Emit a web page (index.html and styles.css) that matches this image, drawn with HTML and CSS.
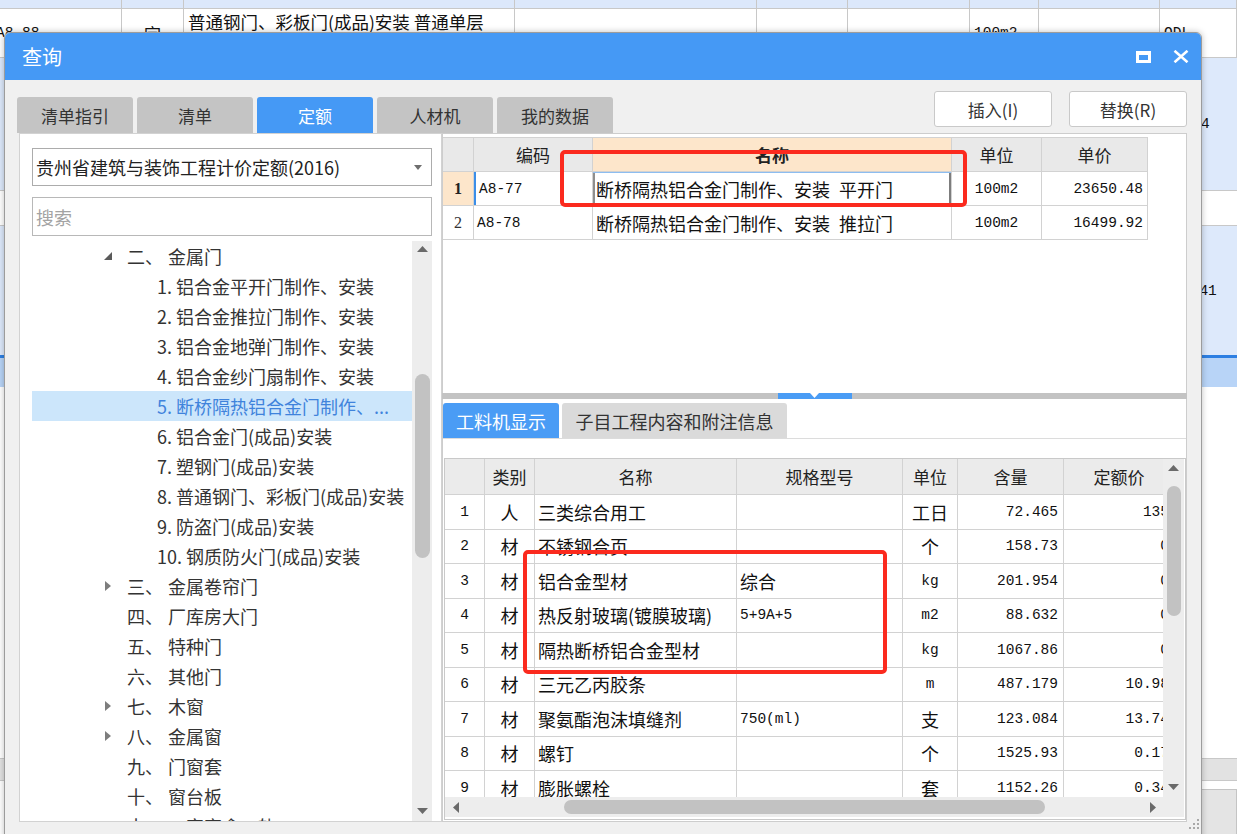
FILE: index.html
```html
<!DOCTYPE html>
<html lang="zh-CN">
<head>
<meta charset="utf-8">
<title>查询</title>
<link rel="stylesheet" href="styles.css">
</head>
<body>
<div class="sheet">
  <div class="srow s1"><span></span><span></span><span></span><span></span><span></span><span></span><span></span><span></span><span></span></div>
  <div class="srow s2">
    <span class="mono lead">A8-88</span>
    <span class="ctr">宗</span>
    <span class="wrap">普通钢门、彩板门(成品)安装 普通单层<br>钢门</span>
    <span></span><span></span><span></span>
    <span class="mono">100m2</span>
    <span></span>
    <span class="mono">QDL</span>
  </div>
  <div class="srow s3"><span class="c9 mono p1">1234</span></div>
  <div class="srow s4"></div>
  <div class="srow s5"><span class="c9 mono p2">3241</span></div>
  <div class="srow s6"></div>
  <div class="srow s7"></div>
  <div class="srow s8"></div>
  <div class="srow s9"><span class="c9 boxcell"></span></div>
</div>

<div class="dialog">
  <div class="titlebar">
    <span class="title">查询</span>
    <div class="winbtns">
      <svg class="wmax" width="15" height="12" viewBox="0 0 15 12"><path d="M0 0H15V12H0Z M3 4V9H12V4Z" fill="#fff" fill-rule="evenodd"/></svg>
      <svg class="wclose" width="16" height="13" viewBox="0 0 16 13"><path d="M1.5 0.8L14.5 12.2M14.5 0.8L1.5 12.2" stroke="#fff" stroke-width="2.6" fill="none"/></svg>
    </div>
  </div>
  <div class="dbody">
    <div class="toolbar">
      <div class="tabs">
        <div class="tab">清单指引</div>
        <div class="tab">清单</div>
        <div class="tab on">定额</div>
        <div class="tab">人材机</div>
        <div class="tab">我的数据</div>
      </div>
      <div class="actions">
        <button class="btn">插入(I)</button>
        <button class="btn">替换(R)</button>
      </div>
    </div>
    <div class="content">
      <div class="leftpanel">
        <div class="select"><span>贵州省建筑与装饰工程计价定额(2016)</span><svg width="8" height="5" viewBox="0 0 8 5"><path d="M0 0H8L4 5Z" fill="#6e6e6e"/></svg></div>
        <div class="search">搜索</div>
        <div class="tree">
          <div class="treelist">
            <div class="node l1"><span class="tw"><svg width="8" height="8" viewBox="0 0 8 8"><path d="M8 0V8H0Z" fill="#5a5a5a"/></svg></span><span class="ord">二、</span><span>金属门</span></div>
            <div class="node l2">1. 铝合金平开门制作、安装</div>
            <div class="node l2">2. 铝合金推拉门制作、安装</div>
            <div class="node l2">3. 铝合金地弹门制作、安装</div>
            <div class="node l2">4. 铝合金纱门扇制作、安装</div>
            <div class="node l2 sel">5. 断桥隔热铝合金门制作、...</div>
            <div class="node l2">6. 铝合金门(成品)安装</div>
            <div class="node l2">7. 塑钢门(成品)安装</div>
            <div class="node l2">8. 普通钢门、彩板门(成品)安装</div>
            <div class="node l2">9. 防盗门(成品)安装</div>
            <div class="node l2">10. 钢质防火门(成品)安装</div>
            <div class="node l1"><span class="tw"><svg width="6" height="10" viewBox="0 0 6 10"><path d="M0 0L6 5L0 10Z" fill="#7d7d7d"/></svg></span><span class="ord">三、</span><span>金属卷帘门</span></div>
            <div class="node l1"><span class="tw"></span><span class="ord">四、</span><span>厂库房大门</span></div>
            <div class="node l1"><span class="tw"></span><span class="ord">五、</span><span>特种门</span></div>
            <div class="node l1"><span class="tw"></span><span class="ord">六、</span><span>其他门</span></div>
            <div class="node l1"><span class="tw"><svg width="6" height="10" viewBox="0 0 6 10"><path d="M0 0L6 5L0 10Z" fill="#7d7d7d"/></svg></span><span class="ord">七、</span><span>木窗</span></div>
            <div class="node l1"><span class="tw"><svg width="6" height="10" viewBox="0 0 6 10"><path d="M0 0L6 5L0 10Z" fill="#7d7d7d"/></svg></span><span class="ord">八、</span><span>金属窗</span></div>
            <div class="node l1"><span class="tw"></span><span class="ord">九、</span><span>门窗套</span></div>
            <div class="node l1"><span class="tw"></span><span class="ord">十、</span><span>窗台板</span></div>
            <div class="node l1"><span class="tw"></span><span class="ord">十一、</span><span>窗帘盒、轨</span></div>
          </div>
          <div class="vscroll">
            <svg class="arr-up" width="11" height="6" viewBox="0 0 11 6"><path d="M0 6L5.5 0L11 6Z" fill="#6a6a6a"/></svg>
            <div class="thumb tthumb"></div>
            <svg class="arr-dn" width="11" height="6" viewBox="0 0 11 6"><path d="M0 0H11L5.5 6Z" fill="#6a6a6a"/></svg>
          </div>
        </div>
      </div>

      <div class="rightcol">
        <div class="upper">
          <div class="qgrid">
            <div class="qrow qhead">
              <div class="qc"></div>
              <div class="qc">编码</div>
              <div class="qc hl">名称</div>
              <div class="qc">单位</div>
              <div class="qc">单价</div>
            </div>
            <div class="qrow">
              <div class="qc no cur">1</div>
              <div class="qc mono lft curcode">A8-77</div>
              <div class="qc lft active">断桥隔热铝合金门制作、安装&#8194;平开门</div>
              <div class="qc mono">100m2</div>
              <div class="qc mono rgt">23650.48</div>
            </div>
            <div class="qrow">
              <div class="qc no">2</div>
              <div class="qc mono lft">A8-78</div>
              <div class="qc lft">断桥隔热铝合金门制作、安装&#8194;推拉门</div>
              <div class="qc mono">100m2</div>
              <div class="qc mono rgt">16499.92</div>
            </div>
          </div>
        </div>
        <div class="splitter"><span class="handle"><svg width="9" height="5" viewBox="0 0 9 5"><path d="M0 0H9L4.5 5Z" fill="#fff"/></svg></span></div>
        <div class="lower">
          <div class="subtabs">
            <div class="subtab on">工料机显示</div>
            <div class="subtab">子目工程内容和附注信息</div>
          </div>
          <div class="grid2">
            <div class="view">
              <div class="ggrid">
                <div class="grow ghead">
                  <div class="gc"></div><div class="gc">类别</div><div class="gc">名称</div><div class="gc">规格型号</div><div class="gc">单位</div><div class="gc">含量</div><div class="gc">定额价</div>
                </div>
                <div class="grow"><div class="gc mono">1</div><div class="gc">人</div><div class="gc lft">三类综合用工</div><div class="gc lft"></div><div class="gc">工日</div><div class="gc mono rgt">72.465</div><div class="gc mono rgt">135</div></div>
                <div class="grow"><div class="gc mono">2</div><div class="gc">材</div><div class="gc lft">不锈钢合页</div><div class="gc lft"></div><div class="gc">个</div><div class="gc mono rgt">158.73</div><div class="gc mono rgt">0</div></div>
                <div class="grow"><div class="gc mono">3</div><div class="gc">材</div><div class="gc lft">铝合金型材</div><div class="gc lft">综合</div><div class="gc mono">kg</div><div class="gc mono rgt">201.954</div><div class="gc mono rgt">0</div></div>
                <div class="grow"><div class="gc mono">4</div><div class="gc">材</div><div class="gc lft">热反射玻璃(镀膜玻璃)</div><div class="gc lft mono">5+9A+5</div><div class="gc mono">m2</div><div class="gc mono rgt">88.632</div><div class="gc mono rgt">0</div></div>
                <div class="grow"><div class="gc mono">5</div><div class="gc">材</div><div class="gc lft">隔热断桥铝合金型材</div><div class="gc lft"></div><div class="gc mono">kg</div><div class="gc mono rgt">1067.86</div><div class="gc mono rgt">0</div></div>
                <div class="grow"><div class="gc mono">6</div><div class="gc">材</div><div class="gc lft">三元乙丙胶条</div><div class="gc lft"></div><div class="gc mono">m</div><div class="gc mono rgt">487.179</div><div class="gc mono rgt">10.98</div></div>
                <div class="grow"><div class="gc mono">7</div><div class="gc">材</div><div class="gc lft">聚氨酯泡沫填缝剂</div><div class="gc lft mono">750(ml)</div><div class="gc">支</div><div class="gc mono rgt">123.084</div><div class="gc mono rgt">13.74</div></div>
                <div class="grow"><div class="gc mono">8</div><div class="gc">材</div><div class="gc lft">螺钉</div><div class="gc lft"></div><div class="gc">个</div><div class="gc mono rgt">1525.93</div><div class="gc mono rgt">0.17</div></div>
                <div class="grow"><div class="gc mono">9</div><div class="gc">材</div><div class="gc lft">膨胀螺栓</div><div class="gc lft"></div><div class="gc">套</div><div class="gc mono rgt">1152.26</div><div class="gc mono rgt">0.34</div></div>
              </div>
            </div>
            <div class="vscroll2">
              <svg class="arr-up2" width="11" height="6" viewBox="0 0 11 6"><path d="M0 6L5.5 0L11 6Z" fill="#6a6a6a"/></svg>
              <div class="thumb vthumb"></div>
              <svg class="arr-dn2" width="11" height="6" viewBox="0 0 11 6"><path d="M0 0H11L5.5 6Z" fill="#6a6a6a"/></svg>
            </div>
            <div class="gfill"></div>
            <div class="hscroll2">
              <svg class="arr-l" width="6" height="11" viewBox="0 0 6 11"><path d="M6 0V11L0 5.5Z" fill="#6a6a6a"/></svg>
              <div class="thumb hthumb"></div>
              <svg class="arr-r" width="6" height="11" viewBox="0 0 6 11"><path d="M0 0V11L6 5.5Z" fill="#6a6a6a"/></svg>
            </div>
            <div class="corner"></div>
            <div class="gfill"></div>
          </div>
        </div>
      </div>
    </div>
  </div>
  <svg class="grip" width="10" height="10" viewBox="0 0 10 10"><g fill="#a8a8a8"><rect x="8" y="0" width="2" height="2"/><rect x="4" y="4" width="2" height="2"/><rect x="8" y="4" width="2" height="2"/><rect x="0" y="8" width="2" height="2"/><rect x="4" y="8" width="2" height="2"/><rect x="8" y="8" width="2" height="2"/></g></svg>
</div>

<div class="redbox rb1"></div>
<div class="redbox rb2"></div>
</body>
</html>
```

FILE: styles.css
```css
* { box-sizing: border-box; }
html, body { margin: 0; padding: 0; }
body {
  width: 1237px;
  height: 834px;
  overflow: hidden;
  position: relative;
  background: #ffffff;
  font-family: "Noto Sans CJK SC", "Noto Sans", sans-serif;
  color: #222;
}
.mono { font-family: "Liberation Mono", "DejaVu Sans Mono", monospace; font-size: 14.5px; }

/* background spreadsheet */
.sheet { display: flex; flex-direction: column; width: 1237px; }
.srow {
  display: grid;
  grid-template-columns: 122px 62px 331px 242px 91px 122px 69px 121px 77px;
  border-bottom: 1px solid #c8c8c8;
}
.s1 > span, .s2 > span { border-right: 1px solid #c8c8c8; overflow: hidden; white-space: nowrap; }
.s1 { height: 9px; background: #dce8fb; }
.s2 { height: 49px; background: #fff; font-size: 17px; color: #111; }
.s2 > span { display: flex; align-items: center; padding-left: 4px; }
.s2 > span.mono { font-size: 14.5px; }
.s2 > span.lead { margin-left: -8px; }
.s2 > span.ctr { justify-content: center; padding-left: 0; }
.s2 > span.wrap { display: block; white-space: nowrap; padding-top: 1px; line-height: 23px; font-size: 17.5px; }
.s3 { height: 133px; background: #dde9fb; }
.s4 { height: 35px; background: #fff; }
.s5 { height: 132px; background: #dde9fb; border-bottom: 3px solid #2d7fe2; }
.s6 { height: 29px; background: #b8d4f7; border-bottom: none; }
.s7 { height: 372px; background: #fff; }
.s8 { height: 22px; background: #e2e2e2; }
.s9 { height: 60px; background: #fff; }
.c9 { grid-column: 9; display: flex; align-items: center; color: #111; }
.p1 { padding-left: 15px; }
.p2 { padding-left: 22px; }
.boxcell { margin: 8px 0 0 20px; background: #e4e4e4; border: 1px solid #c4c4c4; }

/* dialog */
.dialog {
  position: absolute;
  left: 4px;
  top: 32px;
  width: 1198px;
  height: 812px;
  background: #f0f0f0;
  border: 1px solid #9c9c9c;
  border-radius: 6px 6px 0 0;
  box-shadow: 0 0 6px rgba(0, 0, 0, 0.25);
  display: flex;
  flex-direction: column;
  overflow: hidden;
}
.titlebar {
  flex: none;
  height: 47px;
  background: #4599f5;
  display: flex;
  align-items: center;
  justify-content: space-between;
  padding: 0 12px 0 17px;
}
.title { color: #fff; font-size: 20px; }
.winbtns { display: flex; align-items: center; gap: 22px; }
.winbtns svg { display: block; }

.dbody { flex: 1; padding: 0 14px 0 12px; display: flex; flex-direction: column; }
.toolbar { height: 53px; flex: none; display: flex; justify-content: space-between; align-items: flex-start; }
.tabs { display: flex; gap: 4px; margin-top: 17px; }
.tab {
  width: 116px;
  height: 36px;
  background: #c4c4c4;
  border-radius: 3px 3px 0 0;
  color: #333;
  font-size: 17px;
  display: flex;
  align-items: center;
  justify-content: center;
}
.tab.on { background: #4599f5; color: #fff; }
.actions { display: flex; gap: 17px; margin-top: 11px; }
.btn {
  width: 118px;
  height: 36px;
  background: #fff;
  border: 1px solid #c9c9c9;
  border-radius: 3px;
  font-family: "Noto Sans CJK SC", sans-serif;
  font-size: 17px;
  color: #333;
  padding: 0;
}

.content { display: flex; height: 689px; margin-left: 2px; }

/* left panel */
.leftpanel {
  width: 423px;
  height: 689px;
  background: #fff;
  border: 1px solid #d2d2d2;
  padding: 14px 0 0 12px;
  display: flex;
  flex-direction: column;
}
.select {
  width: 400px;
  height: 38px;
  border: 1px solid #acacac;
  display: flex;
  align-items: center;
  justify-content: space-between;
  padding: 0 9px 0 3px;
  font-size: 18px;
  color: #222;
}
.select svg { display: block; }
.search {
  width: 400px;
  height: 39px;
  margin-top: 11px;
  border: 1px solid #b8b8b8;
  display: flex;
  align-items: center;
  padding-left: 3px;
  font-size: 18px;
  color: #a3a3a3;
}
.tree { width: 400px; height: 580px; margin-top: 5px; display: flex; overflow: hidden; }
.treelist { width: 380px; overflow: hidden; }
.node {
  height: 30px;
  display: flex;
  align-items: center;
  white-space: nowrap;
  font-size: 18px;
  color: #333;
}
.node.l1 { padding-left: 66px; }
.node.l2 { padding-left: 125px; }
.tw { width: 20px; height: 30px; display: flex; align-items: center; justify-content: center; margin-right: 9px; }
.tw svg { display: block; }
.ord { margin-right: 5px; }
.node.sel { background: #cce6fb; color: #3f83dc; }

.vscroll { width: 20px; height: 580px; background: #ededed; display: flex; flex-direction: column; align-items: center; }
.arr-up { margin-top: 5px; display: block; }
.thumb { background: #c2c2c2; }
.tthumb { width: 15px; height: 184px; margin-top: 122px; border-radius: 8px; }
.arr-dn { margin-top: auto; margin-bottom: 7px; display: block; }

/* right column */
.rightcol { width: 745px; height: 689px; display: flex; flex-direction: column; }
.upper { height: 260px; flex: none; background: #fff; border: 1px solid #cdcdcd; border-bottom: none; padding-top: 3px; }
.qgrid { width: 705px; border-top: 1px solid #d2d2d2; }
.qrow { display: grid; grid-template-columns: 31px 119px 359px 90px 106px; height: 34px; }
.qc {
  border-right: 1px solid #d2d2d2;
  border-bottom: 1px solid #d2d2d2;
  display: flex;
  align-items: center;
  justify-content: center;
  white-space: nowrap;
  overflow: hidden;
  font-size: 18px;
  color: #111;
}
.qc.mono { font-size: 14.5px; }
.qhead .qc { background: #e9e9e9; font-size: 17px; color: #222; }
.qhead .qc.hl { background: #fde6cb; font-weight: bold; }
.qc.lft { justify-content: flex-start; padding-left: 3px; }
.qc.rgt { justify-content: flex-end; padding-right: 4px; }
.qc.no { font-family: "Liberation Serif", serif; font-size: 16px; color: #333; }
.qc.no.cur { background: #fde6cb; font-weight: bold; color: #222; }
.qc.curcode { box-shadow: inset 2px 0 0 #3b8ee8; padding-left: 5px; }
.qc.active { box-shadow: inset 0 1px 0 #8dbdf0, inset 2px 0 0 #8f8f8f, inset -2px 0 0 #7d7d7d; }

.splitter { height: 6px; flex: none; background: #c3c3c3; display: flex; justify-content: center; }
.handle { width: 74px; height: 6px; background: #4a9cf5; display: flex; justify-content: center; align-items: flex-start; }
.handle svg { display: block; }

.lower {
  flex: 1;
  background: #fff;
  border: 1px solid #cdcdcd;
  border-top: none;
  padding-top: 4px;
  display: flex;
  flex-direction: column;
}
.subtabs { height: 36px; flex: none; display: flex; gap: 3px; border-bottom: 1px solid #dcdcdc; }
.subtab {
  height: 35px;
  border-radius: 3px 3px 0 0;
  background: #dadada;
  color: #333;
  font-size: 18px;
  display: flex;
  align-items: center;
  justify-content: center;
}
.subtab.on { width: 116px; background: #4a9cf5; color: #fff; }
.subtab:not(.on) { width: 225px; }

.grid2 {
  margin: 19px 0 0 1px;
  width: 742px;
  height: 362px;
  border: 1px solid #c9c9c9;
  display: grid;
  grid-template-columns: 718px 21px 1px;
  grid-template-rows: 338px 20px 2px;
}
.view { overflow: hidden; }
.ggrid { width: 730px; }
.grow { display: grid; grid-template-columns: 40px 50px 202px 166px 55px 106px 111px; height: 34.5px; }
.grow.ghead { height: 36px; }
.gc {
  border-right: 1px solid #d2d2d2;
  border-bottom: 1px solid #d2d2d2;
  display: flex;
  align-items: center;
  justify-content: center;
  white-space: nowrap;
  overflow: hidden;
  font-size: 18px;
  color: #111;
}
.ghead .gc { background: #ebebeb; font-size: 17px; color: #222; }
.gc.lft { justify-content: flex-start; padding-left: 3px; }
.gc.rgt { justify-content: flex-end; padding-right: 5px; }
.gc.mono { font-size: 14.5px; }

.vscroll2 { background: #ededed; display: flex; flex-direction: column; align-items: center; }
.arr-up2 { margin-top: 6px; display: block; }
.vthumb { width: 14px; height: 130px; margin-top: 15px; border-radius: 7px; }
.arr-dn2 { margin-top: auto; margin-bottom: 7px; display: block; }
.hscroll2 { background: #ededed; display: flex; align-items: center; padding: 0 7px 0 8px; }
.arr-l, .arr-r { display: block; }
.hthumb { width: 481px; height: 14px; margin-left: 105px; border-radius: 7px; }
.arr-r { margin-left: auto; }
.corner { background: #ededed; }
.gfill { background: #fff; }

.grip { position: absolute; right: 2px; top: 786px; }

/* annotation boxes */
.redbox { position: absolute; border: 4px solid #fb2a1e; border-radius: 5px; }
.rb1 { left: 560px; top: 150px; width: 407px; height: 57px; }
.rb2 { left: 523px; top: 550px; width: 364px; height: 124px; }
```
